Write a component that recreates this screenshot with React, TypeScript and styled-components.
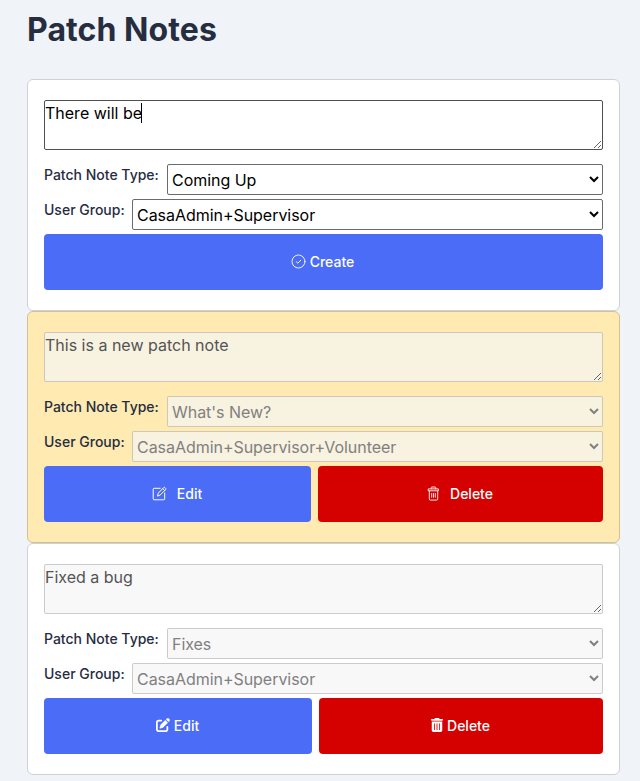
import React from 'react';
import styled, { createGlobalStyle } from 'styled-components';
import { FaPenToSquare, FaTrashCan } from 'react-icons/fa6';

const GlobalStyle = createGlobalStyle`
  *, *::before, *::after { box-sizing: border-box; }
  body {
    margin: 0;
    background: #f0f3f8;
    color: #262d3f;
    font-family: Inter, sans-serif;
    font-size: 16px;
    line-height: 24px;
  }
`;

const Page = styled.main`
  padding: 10px 20px 6px 27px;
  min-height: 781px;
  overflow: hidden;
`;

const Title = styled.h1`
  margin: 0 0 30px;
  font-size: 32px;
  line-height: 39px;
  font-weight: 700;
  letter-spacing: 0.08px;
`;

const Card = styled.section<{ $fresh?: boolean }>`
  height: 232px;
  padding: 20px 16px;
  border: 1px solid ${(p) => (p.$fresh ? '#d2c293' : '#d0d1d3')};
  border-radius: 6px;
  background: ${(p) => (p.$fresh ? '#ffebb2' : '#fff')};
`;

const NoteField = styled.div`
  position: relative;
  height: 50px;
  margin-bottom: 14px;
`;

const NoteArea = styled.textarea`
  display: block;
  width: 100%;
  height: 50px;
  margin: 0;
  padding: 0;
  border: 1px solid #505050;
  border-radius: 2px;
  outline: none;
  background: #fff;
  color: #000;
  font: inherit;
  resize: vertical;

  &:disabled {
    border-color: rgba(118, 118, 118, 0.35);
    background: rgba(245, 245, 245, 0.7);
    color: #545454;
  }
`;

const Caret = styled.span`
  position: absolute;
  left: 97px;
  top: 3px;
  width: 1px;
  height: 20px;
  background: #000;
`;

const FieldRow = styled.div`
  display: flex;
  height: 31px;
  margin-bottom: 4px;
`;

const Label = styled.label<{ $width: number }>`
  flex: 0 0 ${(p) => p.$width}px;
  font-size: 14px;
  line-height: 21px;
  font-weight: 500;
  white-space: nowrap;
`;

const Select = styled.select`
  flex: 1;
  min-width: 0;
  height: 31px;
  margin: 0;
  padding: 1px 0;
  border: 1px solid #6b6b6b;
  border-radius: 2px;
  background: #fff;
  color: #000;
  font: inherit;
  letter-spacing: -0.04px;

  &:disabled {
    border-color: rgba(118, 118, 118, 0.35);
    background: rgba(245, 245, 245, 0.7);
    color: #808080;
    opacity: 1;
  }
`;

const Actions = styled.div<{ $gap?: number }>`
  display: flex;
  gap: ${(p) => p.$gap ?? 0}px;
`;

const Button = styled.button<{ $danger?: boolean; $width?: number; $gap: number; $inset?: number }>`
  display: flex;
  flex: ${(p) => (p.$width ? `0 0 ${p.$width}px` : '1')};
  align-items: center;
  justify-content: center;
  gap: ${(p) => p.$gap}px;
  height: 56px;
  padding: 0 ${(p) => p.$inset ?? 2}px 2px 0;
  border: 0;
  border-radius: 4px;
  background: ${(p) => (p.$danger ? '#d50100' : '#4a6cf7')};
  color: #fff;
  font: 500 14px/21px Inter, sans-serif;

  svg { flex: none; display: block; }
`;

const line = {
  width: 15,
  height: 15,
  viewBox: '0 0 15 15',
  fill: 'none',
  stroke: 'currentColor',
  strokeLinecap: 'round' as const,
  strokeLinejoin: 'round' as const,
};

const CheckIcon = () => (
  <svg {...line} strokeWidth={0.9}>
    <circle cx="7.5" cy="7.5" r="6.5" />
    <path d="M5.2 7.7l1.6 1.5 3-3" />
  </svg>
);

const PencilIcon = () => (
  <svg {...line} strokeWidth={1}>
    <path d="M8.2 2.3H2.1a.9.9 0 0 0-.9.9v9.7a.9.9 0 0 0 .9.9h9.7a.9.9 0 0 0 .9-.9V7" />
    <path d="M5.6 9.7l.7-2.6 5.4-5.5a.8.8 0 0 1 1.2 0l.8.8a.8.8 0 0 1 0 1.2L8.2 9zM10.8 2.6l1.9 1.9" />
  </svg>
);

const BinIcon = () => (
  <svg {...line} strokeWidth={0.9}>
    <path d="M3.3 5v8a1.1 1.1 0 0 0 1.1 1.1h6.2a1.1 1.1 0 0 0 1.1-1.1V5" />
    <path d="M2.6 2.9h9.8v1.9H2.6zM5.3 2.8V1.5a.5.5 0 0 1 .5-.5h3.4a.5.5 0 0 1 .5.5v1.3M5.7 7.5v3.7M7.5 7.5v3.7M9.3 7.5v3.7" />
  </svg>
);

interface NoteProps {
  id: string;
  text: string;
  type: string;
  group: string;
  editing?: boolean;
  fresh?: boolean;
  children: React.ReactNode;
}

function PatchNote({ id, text, type, group, editing, fresh, children }: NoteProps) {
  return (
    <Card $fresh={fresh}>
      <NoteField>
        <NoteArea defaultValue={text} disabled={!editing} spellCheck={false} aria-label="Patch note" />
        {editing && <Caret />}
      </NoteField>
      <FieldRow>
        <Label $width={123} htmlFor={`${id}-type`}>Patch Note Type:</Label>
        <Select id={`${id}-type`} disabled={!editing}><option>{type}</option></Select>
      </FieldRow>
      <FieldRow>
        <Label $width={88} htmlFor={`${id}-group`}>User Group:</Label>
        <Select id={`${id}-group`} disabled={!editing}><option>{group}</option></Select>
      </FieldRow>
      {children}
    </Card>
  );
}

export default function App() {
  return (
    <>
      <GlobalStyle />
      <Page>
        <Title>Patch Notes</Title>
        <PatchNote id="new" text="There will be" type="Coming Up" group="CasaAdmin+Supervisor" editing>
          <Actions>
            <Button $gap={4}><CheckIcon />Create</Button>
          </Actions>
        </PatchNote>
        <PatchNote id="first" text="This is a new patch note" type="What's New?" group="CasaAdmin+Supervisor+Volunteer" fresh>
          <Actions $gap={7}>
            <Button $width={267} $gap={10} $inset={1}><PencilIcon />Edit</Button>
            <Button $danger $gap={9}><BinIcon />Delete</Button>
          </Actions>
        </PatchNote>
        <PatchNote id="second" text="Fixed a bug" type="Fixes" group="CasaAdmin+Supervisor">
          <Actions $gap={7}>
            <Button $width={268} $gap={4} $inset={1}><FaPenToSquare size={14} />Edit</Button>
            <Button $danger $gap={3}><FaTrashCan size={14} />Delete</Button>
          </Actions>
        </PatchNote>
      </Page>
    </>
  );
}
